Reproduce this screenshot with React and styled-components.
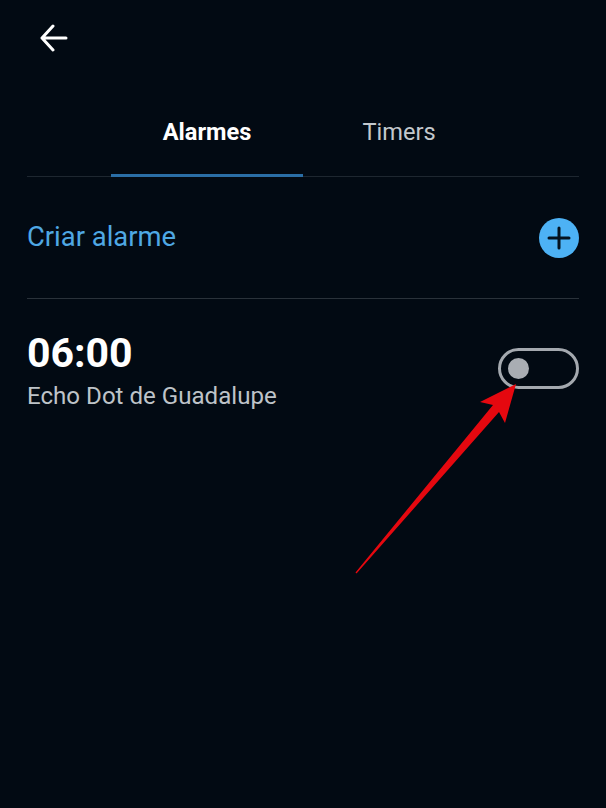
import React from 'react';
import styled, { createGlobalStyle } from 'styled-components';

const GlobalStyle = createGlobalStyle`
  html, body {
    margin: 0;
    padding: 0;
    background: #020a13;
  }
`;

const Screen = styled.div`
  position: relative;
  width: 606px;
  height: 808px;
  overflow: hidden;
  padding: 0 27px;
  box-sizing: border-box;
  background: #020a13;
  font-family: Roboto, "Open Sans", sans-serif;
`;

const TopBar = styled.div`
  height: 104px;
  padding: 24px 0 0 11px;
  box-sizing: border-box;
`;

const BackButton = styled.button`
  display: block;
  width: 32px;
  height: 30px;
  padding: 0;
  border: 0;
  background: none;
  cursor: pointer;
`;

const Tabs = styled.div`
  display: flex;
  justify-content: center;
  border-bottom: 1px solid #1e2730;
`;

const Tab = styled.div`
  width: 192px;
  height: 73px;
  margin-bottom: -1px;
  padding-top: 13px;
  box-sizing: border-box;
  text-align: center;
  font-size: 23.6px;
  line-height: 30px;
  font-weight: ${(p) => (p.$active ? 700 : 400)};
  color: ${(p) => (p.$active ? '#ffffff' : '#c3c8cd')};
  border-bottom: 3px solid ${(p) => (p.$active ? '#2a6ea6' : 'transparent')};
`;

const CreateRow = styled.div`
  display: flex;
  align-items: center;
  justify-content: space-between;
  height: 122px;
  border-bottom: 1px solid #2a323a;
  box-sizing: border-box;
`;

const CreateLabel = styled.span`
  font-size: 27.4px;
  line-height: 34px;
  margin-top: -1px;
  color: #4fa8e4;
`;

const AddButton = styled.div`
  width: 40px;
  height: 40px;
  border-radius: 50%;
  background: #4db2f5;
  display: flex;
  align-items: center;
  justify-content: center;
`;

const AlarmRow = styled.div`
  display: flex;
  align-items: flex-start;
  justify-content: space-between;
  padding-top: 29px;
`;

const AlarmInfo = styled.div`
  display: flex;
  flex-direction: column;
`;

const AlarmTime = styled.div`
  font-size: 41px;
  line-height: 50px;
  font-weight: 700;
  color: #ffffff;
`;

const AlarmDevice = styled.div`
  font-size: 24.1px;
  line-height: 30px;
  margin-top: 3px;
  color: #bec3c8;
`;

const Toggle = styled.div`
  width: 81px;
  height: 41px;
  margin-top: 20px;
  padding-left: 7px;
  border: 3px solid #a4a9af;
  border-radius: 21px;
  box-sizing: border-box;
  display: flex;
  align-items: center;
`;

const Knob = styled.div`
  width: 21px;
  height: 21px;
  border-radius: 50%;
  background: #a9adb3;
`;

const Pointer = styled.svg`
  position: absolute;
  left: 0;
  top: 0;
  pointer-events: none;
`;

export default function App() {
  return (
    <Screen>
      <GlobalStyle />
      <TopBar>
        <BackButton aria-label="Voltar">
          <svg width="30" height="28" viewBox="0 0 30 28" fill="none" stroke="#ffffff" strokeWidth="3" strokeLinecap="round" strokeLinejoin="round">
            <path d="M3 14H27M14 2L3 14L14 26" />
          </svg>
        </BackButton>
      </TopBar>
      <Tabs>
        <Tab $active>Alarmes</Tab>
        <Tab>Timers</Tab>
      </Tabs>
      <CreateRow>
        <CreateLabel>Criar alarme</CreateLabel>
        <AddButton>
          <svg width="26" height="26" viewBox="0 0 26 26" stroke="#04121f" strokeWidth="3" strokeLinecap="round">
            <path d="M13 3V23M3 13H23" />
          </svg>
        </AddButton>
      </CreateRow>
      <AlarmRow>
        <AlarmInfo>
          <AlarmTime>06:00</AlarmTime>
          <AlarmDevice>Echo Dot de Guadalupe</AlarmDevice>
        </AlarmInfo>
        <Toggle>
          <Knob />
        </Toggle>
      </AlarmRow>
      <Pointer width="606" height="808" viewBox="0 0 606 808">
        <path d="M355.5 572.5L356.5 573.5L499 412L505 423L516 384L480 402L493 405Z" fill="#e5080f" />
      </Pointer>
    </Screen>
  );
}
